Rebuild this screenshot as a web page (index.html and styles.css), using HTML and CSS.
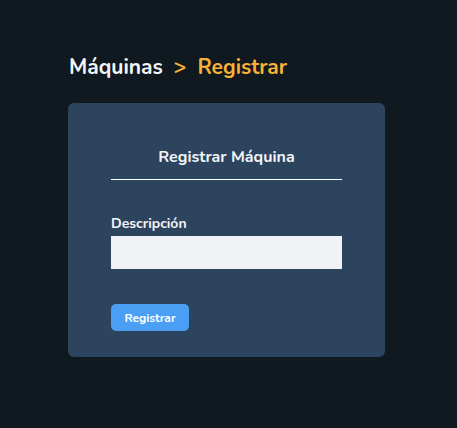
FILE: index.html
```html
<!DOCTYPE html>
<html lang="es">
<head>
<meta charset="utf-8">
<link rel="stylesheet" href="styles.css">
</head>
<body>
<main class="page">
  <h1 class="crumbs"><span class="crumb">Máquinas</span><span class="sep">&gt;</span><span class="current">Registrar</span></h1>
  <section class="card">
    <h2 class="card-title">Registrar Máquina</h2>
    <form class="form">
      <label class="label" for="desc">Descripción</label>
      <input class="input" id="desc" type="text">
      <button class="btn" type="button">Registrar</button>
    </form>
  </section>
</main>
</body>
</html>
```
FILE: styles.css
```css
* { box-sizing: border-box; }
html, body { margin: 0; height: 100%; }
body {
  background: #101820;
  font-family: "Nunito", Lato, "Noto Sans", sans-serif;
  color: #ffffff;
}
.page {
  padding: 52px 0 0 68px;
}
.crumbs {
  margin: 0 0 21px 1px;
  font-size: 21px;
  font-weight: 700;
  line-height: 30px;
  display: flex;
  gap: 11px;
}
.crumb { color: #f3f5f8; }
.sep, .current { color: #f7b335; }
.card {
  width: 317px;
  height: 254px;
  background: #2d445e;
  border-radius: 6px;
  padding: 44px 43px 0 43px;
}
.card-title {
  margin: 0;
  text-align: center;
  font-size: 16px;
  font-weight: 700;
  line-height: 20px;
  padding-bottom: 12px;
  border-bottom: 1px solid #ffffff;
  color: #f3f5f8;
}
.form {
  display: flex;
  flex-direction: column;
  align-items: flex-start;
  margin-top: 35px;
}
.label {
  font-size: 14px;
  font-weight: 700;
  line-height: 18px;
  margin-bottom: 3px;
  color: #f3f5f8;
}
.input {
  width: 231px;
  height: 33px;
  border: none;
  border-radius: 0;
  background: #f0f2f5;
  margin: 0;
  padding: 0 8px;
}
.btn {
  margin-top: 35px;
  width: 78px;
  height: 27px;
  border: none;
  border-radius: 5px;
  background: #4a9ff5;
  color: #ffffff;
  font-family: inherit;
  font-size: 12px;
  font-weight: 700;
  padding: 0;
}
```
